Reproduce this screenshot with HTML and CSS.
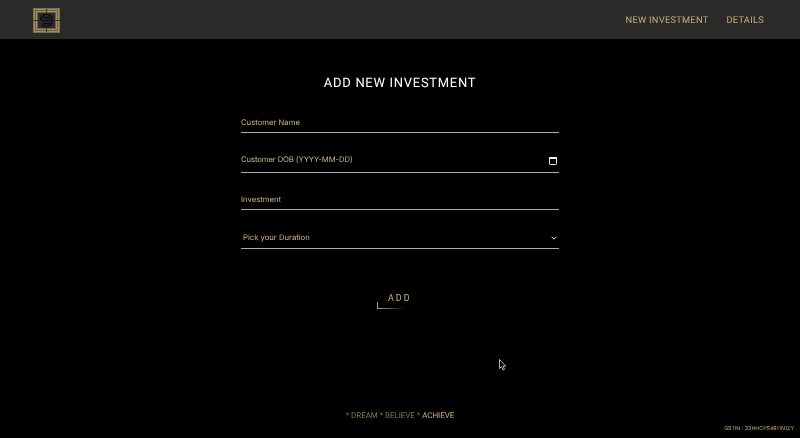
FILE: index.html
```html
<!DOCTYPE html>
<html lang="en">
<head>
<meta charset="utf-8">
<title>Add New Investment</title>
<link rel="stylesheet" href="styles.css">
</head>
<body>
<header class="topbar">
  <svg class="logo" width="27" height="25" viewBox="0 0 27 25" aria-label="logo">
    <rect x="0" y="0" width="27" height="25" fill="#7d6e50"/>
    <rect x="1" y="1" width="25" height="23" fill="#a08e66"/>
    <rect x="2.500" y="2.500" width="22" height="20" fill="none" stroke="#5e5440" stroke-width="0.800"/>
    <rect x="4" y="4" width="19" height="17" fill="#6a5f48"/>
    <rect x="5" y="5" width="17" height="15" fill="#2b2b2d"/>
    <path d="M0 12.500h5M22 12.500h5M13.500 1v4M13.500 20v4" stroke="#3a3427" stroke-width="1"/>
    <path d="M7.500 12.500a6 6 0 1 1 1.800 4.200M7.500 12.500a6 6 0 0 1 1.800-4.200" fill="none" stroke="#0c0c0c" stroke-width="1.400"/>
    <path d="M10 9.500h7M8.500 12.500h9M10 15.500h7" stroke="#0c0c0c" stroke-width="1.300" fill="none"/>
  </svg>
  <nav class="nav">
    <a class="nav-link">NEW INVESTMENT</a>
    <a class="nav-link">DETAILS</a>
  </nav>
</header>
<main class="content">
  <h1 class="title">ADD NEW INVESTMENT</h1>
  <form class="form">
    <div class="field field-name"><span>Customer Name</span></div>
    <div class="field field-dob">
      <span>Customer DOB (YYYY-MM-DD)</span>
      <svg class="icon-cal" width="8" height="8" viewBox="0 0 8 8"><rect x="0.500" y="0.500" width="7" height="7" rx="0.800" fill="none" stroke="#f0f0f0"/><rect x="0" y="0" width="8" height="2" fill="#f0f0f0"/></svg>
    </div>
    <div class="field field-inv"><span>Investment</span></div>
    <div class="field field-sel">
      <span>Pick your Duration</span>
      <svg class="icon-chev" width="6" height="4" viewBox="0 0 6 4"><path d="M0.500 0.700l2.500 2.500 2.500-2.500" fill="none" stroke="#e8e4da" stroke-width="1"/></svg>
    </div>
    <div class="submit-row">
      <button type="button" class="add-btn">ADD</button>
    </div>
  </form>
</main>
<footer class="footer">
  <p class="motto">* DREAM * BELIEVE * <span class="motto-hi">ACHIEVE</span></p>
  <p class="gstin">GSTIN : 33HHCPS4911N1ZY</p>
</footer>
<svg class="cursor" width="8" height="12" viewBox="0 0 8 12"><path d="M0.500 0.500v9l2-1.800 1.500 3.300 1.500-.7-1.500-3.200h2.800z" fill="#000" stroke="#ddd" stroke-width="0.800"/></svg>
</body>
</html>
```

FILE: styles.css
```css
* { box-sizing: border-box; }
html, body { margin: 0; height: 100%; }
body {
  background: #000;
  font-family: Inter, Roboto, "Liberation Sans", sans-serif;
  text-rendering: geometricPrecision;
  height: 438px;
  overflow: hidden;
  display: flex;
  flex-direction: column;
  position: relative;
}
.topbar {
  height: 39px;
  flex: none;
  background: repeating-linear-gradient(to bottom, #2c2c2a 0 1px, #282826 1px 2px);
  display: flex;
  align-items: center;
  justify-content: space-between;
  padding: 0 36px 0 33px;
}
.logo { display: block; margin-top: 2px; }
.nav { display: flex; gap: 18px; margin-top: 2px; will-change: opacity; }
.nav-link {
  font-family: Roboto, sans-serif;
  font-size: 9.300px;
  letter-spacing: 0.250px;
  color: #c4b07f;
}
.content {
  flex: 1;
  display: flex;
  flex-direction: column;
  align-items: center;
  will-change: opacity;
}
.title {
  margin: 36px 0 0;
  font-family: Roboto, sans-serif;
  font-size: 13px;
  line-height: 18px;
  font-weight: 400;
  letter-spacing: 0.700px;
  color: #fff;
}
.form { width: 318px; margin-top: 13px; }
.field {
  display: flex;
  align-items: flex-end;
  justify-content: space-between;
  border-bottom: 1px solid #a9a9a9;
  font-size: 7.700px;
  line-height: 12px;
  color: #c9b483;
}
.field-name { height: 27px; padding-bottom: 3px; }
.field-dob { height: 40px; padding: 0 2px 6px 0; letter-spacing: -0.100px; }
.field-inv { height: 37px; padding-bottom: 3px; }
.field-sel { height: 39px; padding: 0 2px 4px 2px; }
.icon-cal { margin-bottom: 1px; }
.icon-chev { margin-bottom: 4px; }
.submit-row { display: flex; justify-content: center; margin-top: 42px; }
.add-btn {
  width: 46px;
  height: 18px;
  padding: 0 0 4px 11px;
  background: transparent;
  border: 0;
  color: #c9b483;
  font: 400 9px Roboto, sans-serif;
  letter-spacing: 2px;
  white-space: nowrap;
  position: relative;
  text-align: left;
  line-height: 14px;
  display: block;
}
.add-btn::before {
  content: "";
  position: absolute;
  left: 0;
  bottom: 0;
  width: 1px;
  height: 7px;
  background: #b8a374;
}
.add-btn::after {
  content: "";
  position: absolute;
  left: 0;
  bottom: 0;
  width: 28px;
  height: 1px;
  background: linear-gradient(to right, #b8a374, #000);
}
.footer {
  position: absolute;
  left: 0;
  right: 0;
  bottom: 0;
  will-change: opacity;
}
.motto {
  margin: 0 0 18px;
  text-align: center;
  font-family: Roboto, sans-serif;
  font-size: 8px;
  letter-spacing: -0.050px;
  color: #857450;
}
.motto-hi { color: #c4b07f; }
.gstin {
  margin: 0;
  position: absolute;
  right: 6px;
  bottom: 6px;
  font-size: 5.300px;
  color: #c4b07f;
}
.cursor { position: absolute; left: 499px; top: 359px; }
```
